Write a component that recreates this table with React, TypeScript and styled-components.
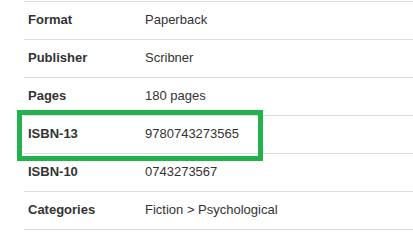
import React from "react";
import styled, { createGlobalStyle } from "styled-components";

const Global = createGlobalStyle`
  html, body { margin: 0; padding: 0; background: #fff; }
  body { font-family: Arial, "Liberation Sans", sans-serif; overflow: hidden; }
`;

const Page = styled.div`
  padding: 1px 0 0 24px;
  width: 413px;
  box-sizing: border-box;
`;

const Table = styled.div`
  display: flex;
  flex-direction: column;
  border-top: 1px solid #dddddd;
  width: 389px;
`;

const Row = styled.div`
  position: relative;
  display: grid;
  grid-template-columns: 117px 1fr;
  height: 38px;
  align-items: center;
  border-bottom: 1px solid #dddddd;
  box-sizing: border-box;
  padding: 0 4px;
  font-size: 13px;
  color: #333333;
`;

const Label = styled.div`
  font-weight: bold;
  margin-top: -2px;
`;

const Value = styled.div`
  margin-top: -2px;
`;

const Highlight = styled.div`
  position: absolute;
  left: -7px;
  top: -6px;
  width: 246px;
  height: 51px;
  border: 5px solid #22b14c;
  box-sizing: border-box;
  pointer-events: none;
`;

const rows: { label: string; value: string; highlight?: boolean }[] = [
  { label: "Format", value: "Paperback" },
  { label: "Publisher", value: "Scribner" },
  { label: "Pages", value: "180 pages" },
  { label: "ISBN-13", value: "9780743273565", highlight: true },
  { label: "ISBN-10", value: "0743273567" },
  { label: "Categories", value: "Fiction > Psychological" },
];

export default function App() {
  return (
    <>
      <Global />
      <Page>
        <Table>
          {rows.map((r) => (
            <Row key={r.label}>
              <Label>{r.label}</Label>
              <Value>{r.value}</Value>
              {r.highlight && <Highlight />}
            </Row>
          ))}
        </Table>
      </Page>
    </>
  );
}
